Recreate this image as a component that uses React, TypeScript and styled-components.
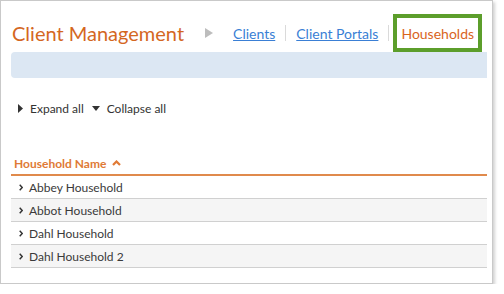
import React from 'react';
import styled, { createGlobalStyle } from 'styled-components';

const GlobalStyle = createGlobalStyle`
    body {
        margin: 0;
        background: #fff;
        font-family: Lato, "Liberation Sans", sans-serif;
    }
`;

const Frame = styled.div`
    width: 493px;
    height: 284px;
    box-sizing: border-box;
    border: 1px solid #c9c9c9;
    box-shadow: 2px 2px 3px rgba(0, 0, 0, 0.18);
    padding: 0 5px 0 10px;
`;

const Header = styled.div`
    display: flex;
    align-items: center;
    height: 38px;
    margin-top: 13px;
    white-space: nowrap;
    & > * {
        flex-shrink: 0;
    }
`;

const Title = styled.h1`
    margin: 0 0 0 1px;
    font-size: 20px;
    font-weight: normal;
    color: #d4671f;
`;

const Crumb = styled.span`
    display: flex;
    margin: 0 20px 0 21px;
`;

const NavLink = styled.a<{ active?: boolean }>`
    font-size: 14px;
    color: ${({ active }) => (active ? '#d9641c' : '#3a7fd5')};
    text-decoration: ${({ active }) => (active ? 'none' : 'underline')};
    cursor: pointer;
`;

const Sep = styled.span`
    width: 1px;
    height: 16px;
    background: #dadada;
    margin: 0 10px;
`;

const ActiveBox = styled.div`
    height: 38px;
    box-sizing: border-box;
    border: 4px solid #5c9e2b;
    display: flex;
    align-items: center;
    padding: 0 4px;
    margin-left: -6px;
`;

const InfoBar = styled.div`
    height: 26px;
    background: #dce7f3;
    border-radius: 4px 0 0 4px;
`;

const Toolbar = styled.div`
    display: flex;
    align-items: center;
    gap: 8px;
    margin: 23px 0 0 7px;
    font-size: 12px;
    color: #333;
`;

const ToolItem = styled.span`
    display: flex;
    align-items: center;
    gap: 7px;
`;

const Table = styled.div`
    margin-top: 36px;
`;

const HeadCell = styled.div`
    display: flex;
    align-items: center;
    gap: 6px;
    height: 22px;
    padding-left: 3px;
    font-size: 12px;
    font-weight: bold;
    color: #e07a36;
    border-bottom: 2px solid #e08a4c;
`;

const Row = styled.div<{ shaded: boolean }>`
    display: flex;
    align-items: center;
    gap: 6px;
    height: 22px;
    padding-left: 8px;
    font-size: 12px;
    color: #3a3a3a;
    background: ${({ shaded }) => (shaded ? '#f5f5f5' : '#fff')};
    border-bottom: 1px solid #d0d0d0;
`;

const households = ['Abbey Household', 'Abbot Household', 'Dahl Household', 'Dahl Household 2'];

const App = () => (
    <Frame>
        <GlobalStyle />
        <Header>
            <Title>Client Management</Title>
            <Crumb>
                <svg width="8" height="10" viewBox="0 0 8 10">
                    <polygon points="0,0 8,5 0,10" fill="#bdbdbd" />
                </svg>
            </Crumb>
            <NavLink>Clients</NavLink>
            <Sep />
            <NavLink>Client Portals</NavLink>
            <Sep />
            <ActiveBox>
                <NavLink active>Households</NavLink>
            </ActiveBox>
        </Header>
        <InfoBar />
        <Toolbar>
            <ToolItem>
                <svg width="5" height="9" viewBox="0 0 5 9">
                    <polygon points="0,0 5,4.5 0,9" fill="#333" />
                </svg>
                Expand all
            </ToolItem>
            <ToolItem>
                <svg width="8" height="5" viewBox="0 0 8 5">
                    <polygon points="0,0 8,0 4,5" fill="#333" />
                </svg>
                Collapse all
            </ToolItem>
        </Toolbar>
        <Table>
            <HeadCell>
                Household Name
                <svg width="9" height="6" viewBox="0 0 9 6">
                    <polyline points="1,5 4.5,1.5 8,5" fill="none" stroke="#e07a36" strokeWidth="2.2" />
                </svg>
            </HeadCell>
            {households.map((name, index) => (
                <Row key={name} shaded={index % 2 === 1}>
                    <svg width="4" height="7" viewBox="0 0 4 7">
                        <polyline points="0.7,0.7 3.2,3.5 0.7,6.3" fill="none" stroke="#333" strokeWidth="1.4" />
                    </svg>
                    {name}
                </Row>
            ))}
        </Table>
    </Frame>
);

export default App;
